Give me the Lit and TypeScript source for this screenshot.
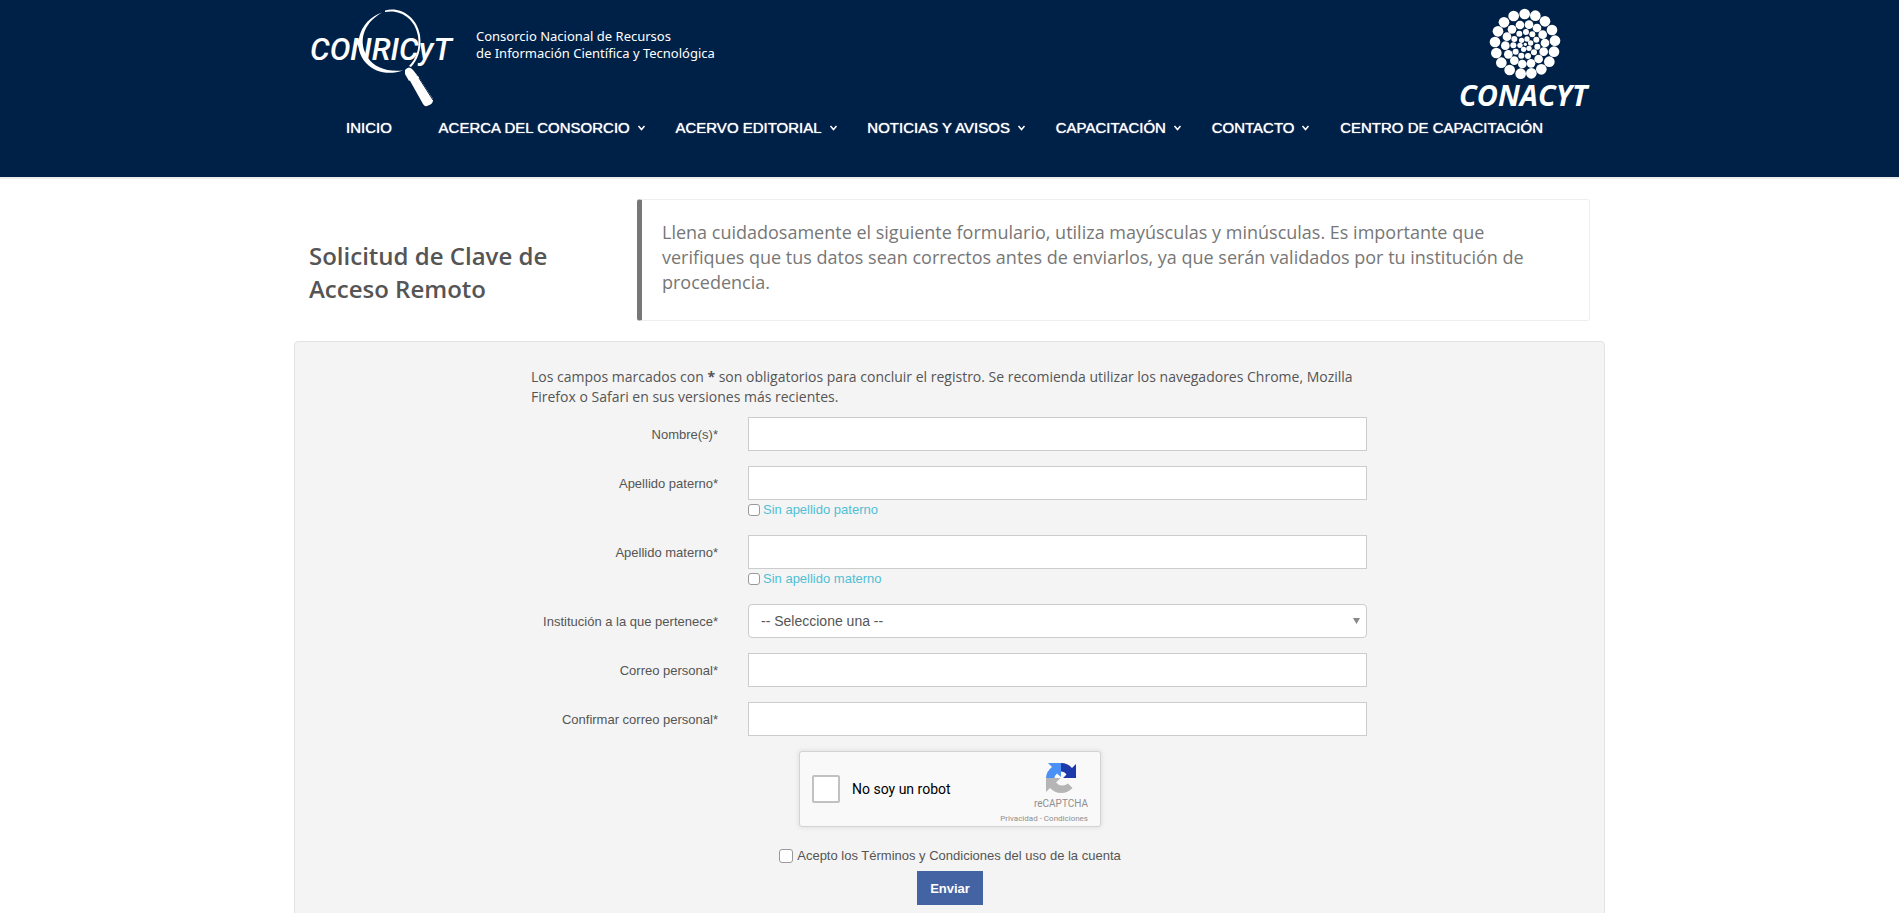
import { LitElement, html, svg, css } from "lit";
import { customElement } from "lit/decorators.js";

type Dot = [number, number];
const rings: { r: number; dots: Dot[] }[] = [
  { r: 16, dots: [[284,42],[316,47],[345,64],[366,90],[375,122],[372,155],[358,185],[334,208],[304,220],[272,221],[239,210],[214,188],[199,159],[195,126],[204,94],[222,67],[251,48]] },
  { r: 13, dots: [[270,75],[297,74],[321,84],[338,104],[345,129],[341,155],[326,177],[303,190],[277,192],[253,182],[235,163],[226,137],[231,110],[246,88]] },
  { r: 9, dots: [[288,96],[307,103],[319,119],[322,140],[312,157],[294,168],[274,167],[257,155],[250,136],[253,117],[268,101]] },
  { r: 8, dots: [[291,117],[302,129],[297,145],[281,148],[270,136],[275,121]] },
  { r: 5, dots: [[286,133]] },
];

const menu = [
  { text: "INICIO", sub: false },
  { text: "ACERCA DEL CONSORCIO", sub: true },
  { text: "ACERVO EDITORIAL", sub: true },
  { text: "NOTICIAS Y AVISOS", sub: true },
  { text: "CAPACITACIÓN", sub: true },
  { text: "CONTACTO", sub: true },
  { text: "CENTRO DE CAPACITACIÓN", sub: false },
];

@customElement("site-header")
class SiteHeader extends LitElement {
  static styles = css`
    :host {
      display: block;
      background: #002147;
      border-bottom: 2px solid #ececec;
      color: #fff;
      font-family: "Liberation Sans", Arial, sans-serif;
    }
    .inner { max-width: 1281px; margin: 0 auto; padding-bottom: 37px; }
    .brands { display: flex; justify-content: space-between; height: 112px; }
    .brand { display: flex; gap: 19px; color: inherit; text-decoration: none; }
    .tagline {
      margin: 0;
      padding-top: 28px;
      font: 400 13px/17px "Noto Sans", sans-serif;
    }
    .conricyt { font: italic 500 31px Roboto, sans-serif; }
    .conacyt { font: italic 700 29px "Open Sans", sans-serif; }
    svg { display: block; overflow: visible; }
    .nav {
      display: flex;
      justify-content: space-between;
      padding: 4px 47px 0 37px;
      line-height: 24px;
    }
    .item {
      display: flex;
      align-items: center;
      gap: 8px;
      color: #fff;
      font-size: 15px;
      text-decoration: none;
      white-space: nowrap;
      text-shadow: 0 0 1px #fff;
    }
    .item.plain { padding-right: 16px; }
    .item.plain:last-child { padding-right: 0; }
  `;
  render() {
    return html`
      <header class="inner">
        <div class="brands">
          <a class="brand" href="#">
            <svg width="148" height="112" viewBox="0 0 148 112" fill="#fff" role="img" aria-label="CONRICyT">
              <path d="M76 10.500 C91 6 108 17 111 35 C113 50 108 61 102 67 L100 66 C107 59 111 49 109 36 C106 18 91 9 76 12Z" />
              <path d="M73 12.500 C49 21 43 48 57 63 C66 73 81 75 94 70.500 C77 72 65 67 59 58 C49 43 53 24 73 12.500Z" />
              <path d="M96 70 q4-5 8 0 l4 5 -8 6 -4-7Z" />
              <path d="M100 79 q5-6 9-3 l15 23 q1 5-6 7 q-2 1-4-2Z" />
              <path d="M110 78 l14 22" stroke="#002147" fill="none" />
              <text class="conricyt" x="1" y="60">CONRICyT</text>
            </svg>
            <p class="tagline">Consorcio Nacional de Recursos<br />de Información Científica y Tecnológica</p>
          </a>
          <a class="brand" href="#">
            <svg width="131" height="112" viewBox="0 0 131 112" fill="#fff" role="img" aria-label="CONACYT">
              <g transform="translate(-29 0) scale(0.3333)">
                ${rings.map((ring) => ring.dots.map(([x, y]) => svg`<circle cx=${x} cy=${y} r=${ring.r} />`))}
              </g>
              <text class="conacyt" x="0" y="106">CONACYT</text>
            </svg>
          </a>
        </div>
        <nav class="nav">
          ${menu.map((m) => html`<a class="item ${m.sub ? "" : "plain"}" href="#">${m.text}${m.sub
            ? html`<svg width="7" height="6" viewBox="0 0 7 6" fill="none" stroke="#fff" stroke-width="1.500"><path d="M.5 1 3.500 4.500 6.500 1" /></svg>`
            : ""}</a>`)}
        </nav>
      </header>
    `;
  }
}

@customElement("captcha-box")
class CaptchaBox extends LitElement {
  static styles = css`
    :host {
      box-sizing: border-box;
      display: flex;
      align-items: center;
      width: 302px;
      height: 76px;
      padding: 0 12px;
      border: 1px solid #d3d3d3;
      border-radius: 3px;
      background: #f9f9f9;
      box-shadow: 0 0 4px 1px rgba(0, 0, 0, 0.08);
      font-family: Roboto, sans-serif;
    }
    .check {
      appearance: none;
      box-sizing: border-box;
      width: 28px;
      height: 28px;
      margin: 0 12px 0 0;
      border: 2px solid #c1c1c1;
      border-radius: 2px;
      background: #fff;
    }
    .label { flex: 1; font-size: 14px; color: #000; }
    .mark { display: flex; flex-direction: column; align-items: flex-end; color: #8f8f8f; padding-top: 8px; }
    .logo { margin-right: 11px; }
    .name { font-size: 10px; line-height: 12px; margin-top: 4px; }
    .links { font-size: 8px; line-height: 10px; margin-top: 4px; }
    .links a { color: inherit; text-decoration: none; }
  `;
  render() {
    return html`
      <input class="check" id="robot" type="checkbox" />
      <label class="label" for="robot">No soy un robot</label>
      <div class="mark">
        <svg class="logo" width="32" height="32" viewBox="0 0 32 32">
          <path fill="#1c3aa9" d="M16 1A15 15 0 0 1 27 6L31 2V16H18L21.500 12.500A6.500 6.500 0 0 0 16 9.500Z" />
          <path fill="#4a90f5" d="M16 1H3L7 5A15 15 0 0 0 1 16H9.500A7 7 0 0 1 12 11.500L16 15Z" />
          <path fill="#b5b5b5" d="M1 16V30L5 26A15 15 0 0 0 27.500 26L23 21.500A8.500 8.500 0 0 1 11 20.500L15.500 16Z" />
        </svg>
        <span class="name">reCAPTCHA</span>
        <span class="links"><a href="#">Privacidad</a> - <a href="#">Condiciones</a></span>
      </div>
    `;
  }
}

@customElement("app-root")
class AppRoot extends LitElement {
  static styles = css`
    :host {
      display: block;
      background: #fff;
      color: #555;
      font: 13px/20px "Liberation Sans", Arial, sans-serif;
    }
    .intro {
      display: grid;
      grid-template-columns: 328px 1fr;
      align-items: center;
      max-width: 1281px;
      margin: 20px auto;
    }
    .title {
      margin: 24px 60px 0 0;
      font: 600 24px/33px "Open Sans", sans-serif;
    }
    .note {
      box-sizing: border-box;
      min-height: 122px;
      margin: 0;
      padding: 20px 24px 20px 20px;
      border: 1px solid #eee;
      border-left: 5px solid #777;
      border-radius: 3px;
      color: #777;
      font: 18px/25px "Open Sans", sans-serif;
    }
    .well {
      box-sizing: border-box;
      max-width: 1311px;
      margin: 0 auto;
      padding: 25px 237px 24px 236px;
      border: 1px solid #e3e3e3;
      border-radius: 4px;
      background: #f4f4f4;
    }
    .help {
      margin: 0 0 10px;
      font: 14px/20px "Open Sans", sans-serif;
    }
    .row {
      display: grid;
      grid-template-columns: 187px 1fr;
      column-gap: 30px;
      margin-bottom: 15px;
    }
    .label { height: 34px; text-align: right; line-height: 36px; }
    .box {
      box-sizing: border-box;
      display: block;
      width: 100%;
      height: 34px;
      padding: 0 12px;
      border: 1px solid #ccc;
      border-radius: 0;
      background: #fff;
      color: #555;
      font: 14px "Liberation Sans", Arial, sans-serif;
    }
    .pick { position: relative; }
    .pick .box { appearance: none; border-radius: 4px; }
    .arrow { position: absolute; right: 7px; top: 14px; pointer-events: none; }
    .option { display: flex; align-items: center; gap: 3px; height: 20px; color: #4fc0d4; }
    .tick {
      appearance: none;
      box-sizing: border-box;
      width: 12px;
      height: 12px;
      margin: 0;
      border: 1px solid #999;
      border-radius: 3px;
      background: #fff;
    }
    .end { display: flex; flex-direction: column; align-items: center; padding-left: 2px; }
    .terms { display: flex; align-items: center; gap: 4px; margin: 19px 0 5px; }
    .terms .tick { width: 14px; height: 14px; }
    .send {
      height: 34px;
      padding: 0 13px;
      border: 0;
      background: #4463a3;
      color: #fff;
      font: bold 13px "Liberation Sans", Arial, sans-serif;
    }
  `;

  private field(id: string, label: string, option = "") {
    return html`
      <div class="row">
        <label class="label" for=${id}>${label}*</label>
        <div>
          <input class="box" id=${id} type="text" />
          ${option
            ? html`<div class="option"><input class="tick" id="sin-${id}" type="checkbox" /><label for="sin-${id}">${option}</label></div>`
            : ""}
        </div>
      </div>
    `;
  }

  render() {
    return html`
      <site-header></site-header>
      <section class="intro">
        <h1 class="title">Solicitud de Clave de Acceso Remoto</h1>
        <blockquote class="note">
          Llena cuidadosamente el siguiente formulario, utiliza mayúsculas y minúsculas. Es importante que
          verifiques que tus datos sean correctos antes de enviarlos, ya que serán validados por tu institución de
          procedencia.
        </blockquote>
      </section>
      <form class="well">
        <p class="help">
          Los campos marcados con <b>*</b> son obligatorios para concluir el registro. Se recomienda utilizar los
          navegadores Chrome, Mozilla Firefox o Safari en sus versiones más recientes.
        </p>
        ${this.field("nombre", "Nombre(s)")}
        ${this.field("paterno", "Apellido paterno", "Sin apellido paterno")}
        ${this.field("materno", "Apellido materno", "Sin apellido materno")}
        <div class="row">
          <label class="label" for="institucion">Institución a la que pertenece*</label>
          <div class="pick">
            <select class="box" id="institucion"><option>-- Seleccione una --</option></select>
            <svg class="arrow" width="7" height="6" viewBox="0 0 7 6"><path fill="#888" d="M0 0h7L3.500 6Z" /></svg>
          </div>
        </div>
        ${this.field("correo", "Correo personal")}
        ${this.field("confirmar", "Confirmar correo personal")}
        <div class="end">
          <captcha-box></captcha-box>
          <div class="terms">
            <input class="tick" id="terminos" type="checkbox" />
            <label for="terminos">Acepto los Términos y Condiciones del uso de la cuenta</label>
          </div>
          <button class="send" type="button">Enviar</button>
        </div>
      </form>
    `;
  }
}
